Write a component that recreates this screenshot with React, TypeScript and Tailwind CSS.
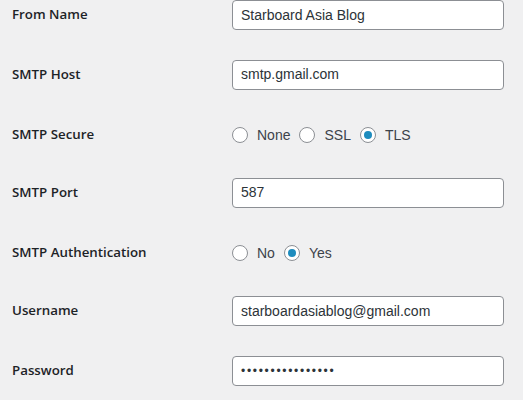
import React from 'react';

interface Field {
  label: string;
  height: string;
  kind: 'text' | 'password' | 'radio';
  value?: string;
  options?: string[];
  checked?: string;
}

const fields: Field[] = [
  { label: 'From Name', height: 'h-[60px]', kind: 'text', value: 'Starboard Asia Blog' },
  { label: 'SMTP Host', height: 'h-[59px]', kind: 'text', value: 'smtp.gmail.com' },
  { label: 'SMTP Secure', height: 'h-[59px]', kind: 'radio', options: ['None', 'SSL', 'TLS'], checked: 'TLS' },
  { label: 'SMTP Port', height: 'h-[59px]', kind: 'text', value: '587' },
  { label: 'SMTP Authentication', height: 'h-[59px]', kind: 'radio', options: ['No', 'Yes'], checked: 'Yes' },
  { label: 'Username', height: 'h-[60px]', kind: 'text', value: 'starboardasiablog@gmail.com' },
  { label: 'Password', height: 'h-[60px]', kind: 'password', value: '••••••••••••••••' }
];

const Radio = ({ label, checked }: { label: string; checked: boolean }) => (
  <label className="mr-[9px] flex items-center">
    <span className="flex h-4 w-4 items-center justify-center rounded-full border border-[#8c8f94] bg-white">
      {checked && <span className="h-2 w-2 rounded-full bg-[#1e8cbe]" />}
    </span>
    <span className="ml-[9px] text-[14px] text-[#3c434a]">{label}</span>
  </label>
);

const App: React.FC = () => {
  return (
    <div className="h-[400px] w-[523px] overflow-hidden bg-[#f0f0f1] font-['Liberation_Sans',sans-serif]">
      <div className="-mt-[15px]">
        {fields.map((field) => (
          <div
            key={field.label}
            className={`flex items-center ${field.height} ${field.kind === 'radio' ? 'pt-[3px]' : ''}`}
          >
            <div className="w-[232px] shrink-0 pl-3 font-['Open_Sans',sans-serif] text-[13.3px] font-semibold text-[#1d2327]">
              {field.label}
            </div>
            {field.kind === 'radio' ? (
              <div className="flex items-center">
                {field.options?.map((opt) => (
                  <Radio key={opt} label={opt} checked={opt === field.checked} />
                ))}
              </div>
            ) : (
              <div className="flex h-[30px] w-[272px] items-center rounded-[4px] border border-[#8c8f94] bg-white px-2 text-[14px] text-[#2c3338]">
                {field.kind === 'password' ? (
                  <span className="text-[12px] tracking-[1.7px]">{field.value}</span>
                ) : (
                  field.value
                )}
              </div>
            )}
          </div>
        ))}
      </div>
    </div>
  );
};

export default App;
